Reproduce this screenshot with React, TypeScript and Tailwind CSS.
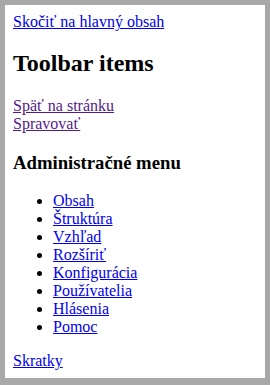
const menu = [
  "Obsah",
  "Štruktúra",
  "Vzhľad",
  "Rozšíriť",
  "Konfigurácia",
  "Používatelia",
  "Hlásenia",
  "Pomoc",
];

export default function App() {
  return (
    <div className="h-[385px] bg-[#a8a8a8] p-[5px] pb-[7px] [font-family:'Liberation_Serif','Times_New_Roman',serif] text-base leading-[18px] text-black">
      <div className="h-full bg-white px-2 pt-2">
        <a href="#main" className="text-[#0000ee] underline">
          Skočiť na hlavný obsah
        </a>

        <h1 className="mt-[19px] text-[24px] leading-[27px] font-bold">Toolbar items</h1>

        <div className="mt-5 flex flex-col items-start">
          <a href="#back" className="text-[#551a8b] underline">
            Späť na stránku
          </a>
          <a href="#manage" className="text-[#551a8b] underline">
            Spravovať
          </a>
        </div>

        <h2 className="mt-[19px] text-[18.72px] leading-[22px] font-bold">Administračné menu</h2>

        <ul className="mt-[18px] list-disc pl-10">
          {menu.map((item) => (
            <li key={item}>
              <a href="#" className="text-[#0000ee] underline">
                {item}
              </a>
            </li>
          ))}
        </ul>

        <div className="mt-4">
          <a href="#shortcuts" className="text-[#0000ee] underline">
            Skratky
          </a>
        </div>
      </div>
    </div>
  );
}
